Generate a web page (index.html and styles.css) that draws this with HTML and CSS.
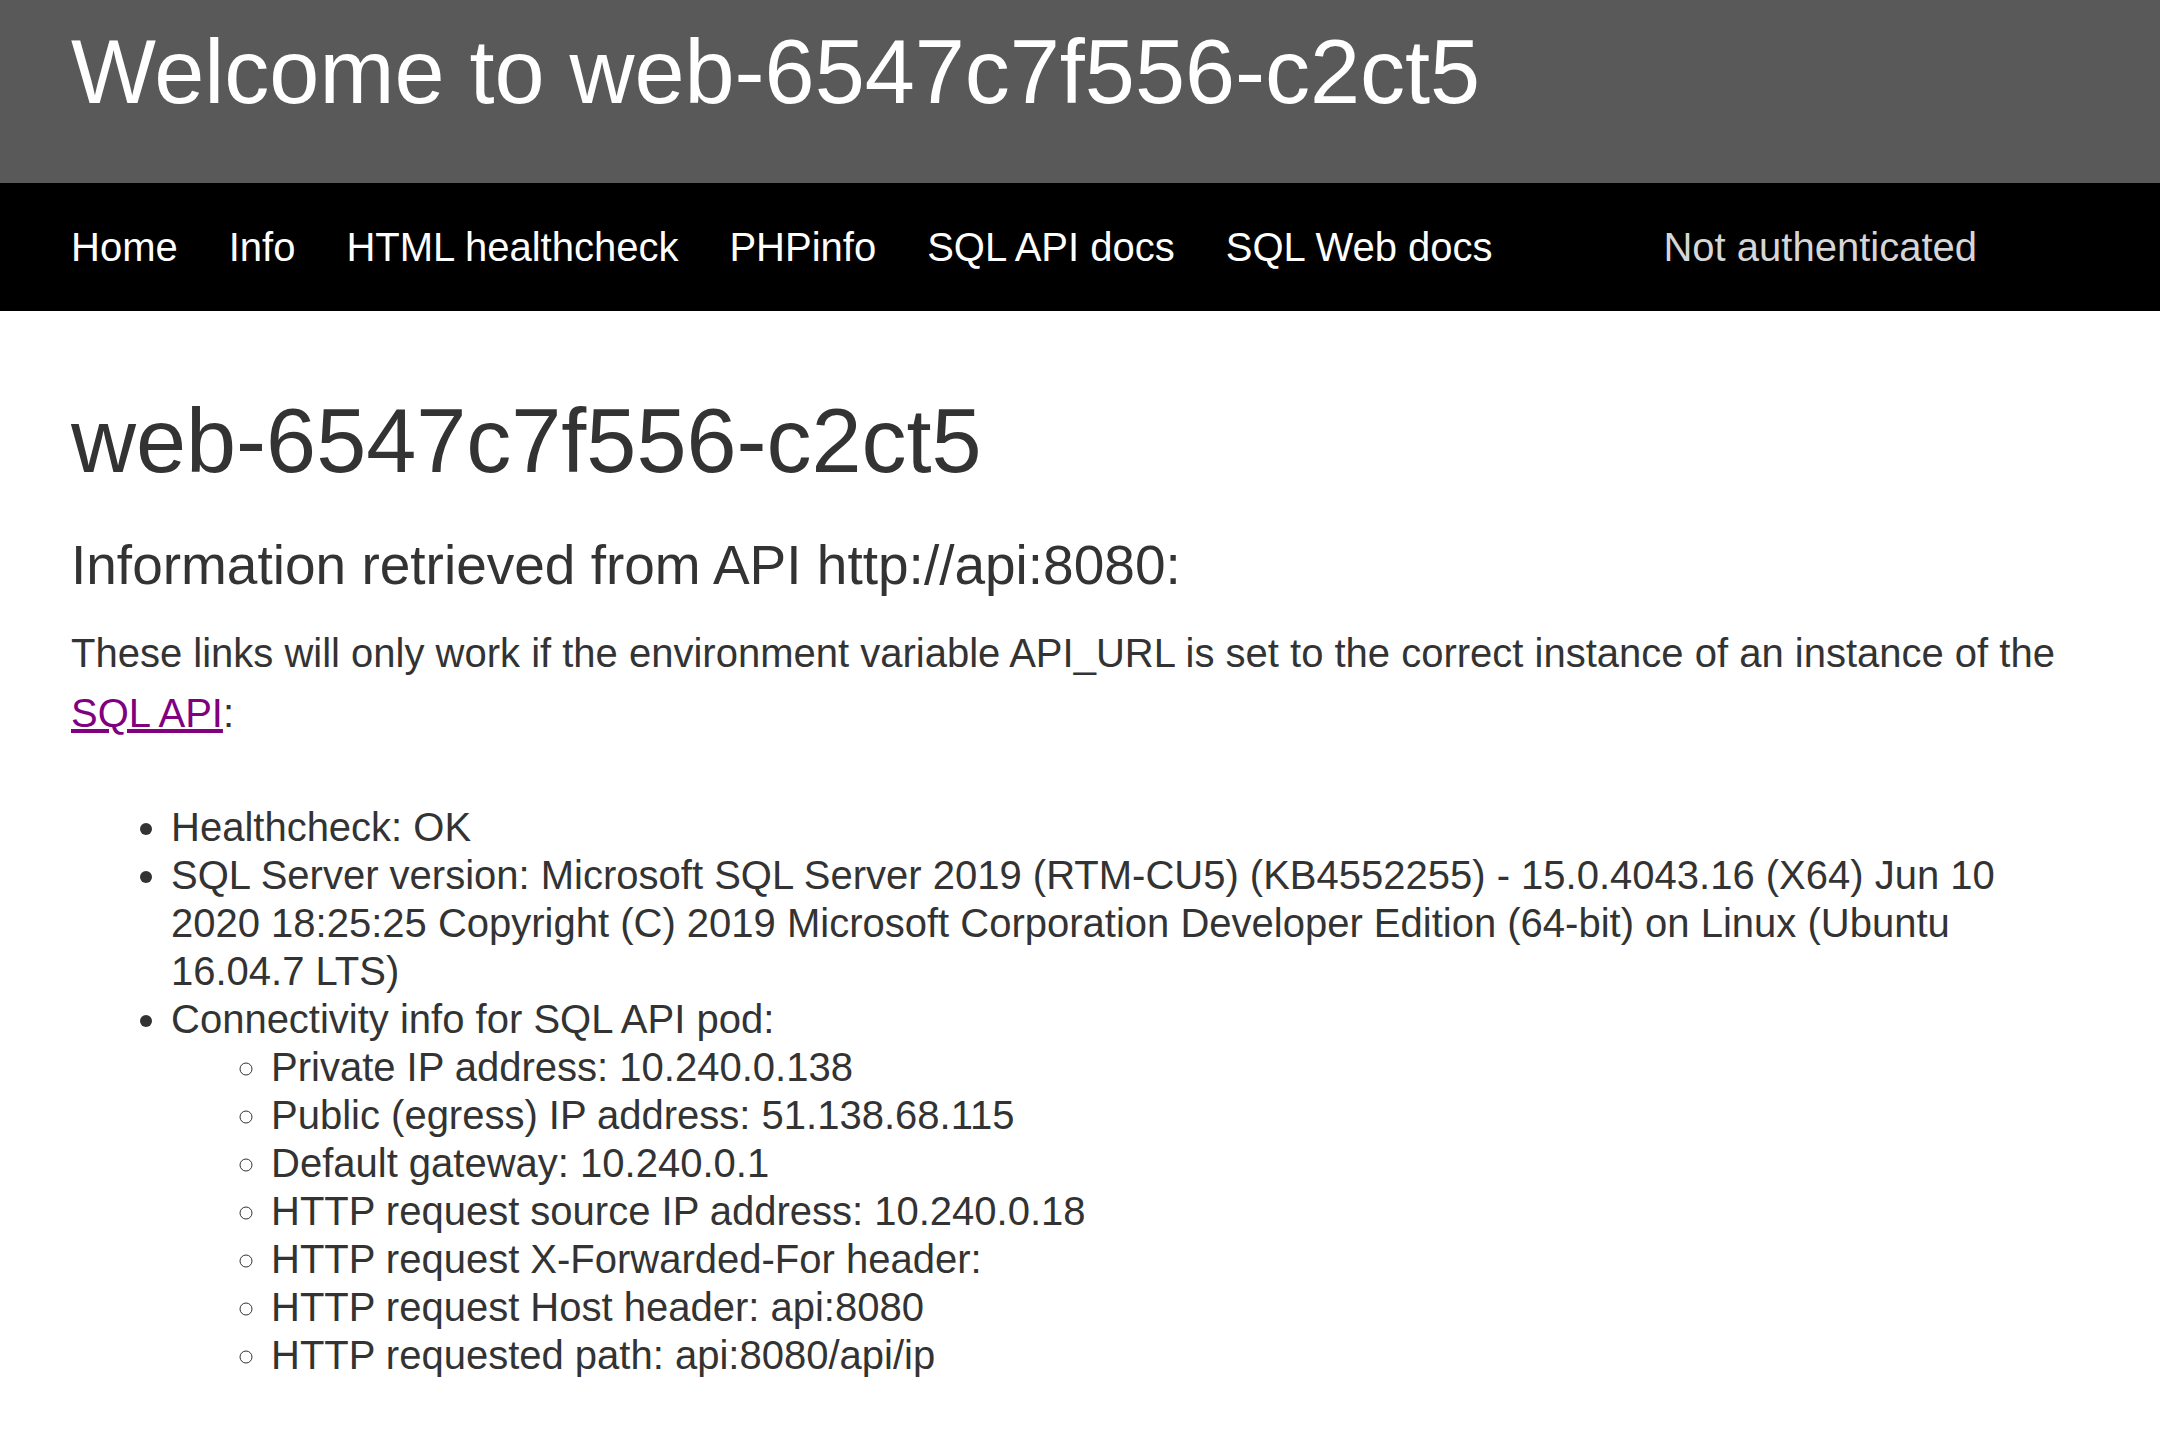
FILE: index.html
```html
<!DOCTYPE html>
<html lang="en">
<head>
<meta charset="utf-8">
<title>Welcome to web-6547c7f556-c2ct5</title>
<link rel="stylesheet" href="styles.css">
</head>
<body>
<header class="banner">
  <h1 class="banner-title">Welcome to web-6547c7f556-c2ct5</h1>
</header>
<nav class="topnav">
  <a class="nav-link" href="#">Home</a>
  <a class="nav-link" href="#">Info</a>
  <a class="nav-link" href="#">HTML healthcheck</a>
  <a class="nav-link" href="#">PHPinfo</a>
  <a class="nav-link" href="#">SQL API docs</a>
  <a class="nav-link" href="#">SQL Web docs</a>
  <span class="auth">Not authenticated</span>
</nav>
<main class="content">
  <h1 class="host">web-6547c7f556-c2ct5</h1>
  <h3 class="subtitle">Information retrieved from API http://api:8080:</h3>
  <p class="intro">These links will only work if the environment variable API_URL is set to the correct instance of an instance of the <a class="doc-link" href="#">SQL API</a>:</p>
  <ul class="info-list">
    <li>Healthcheck: OK</li>
    <li>SQL Server version: Microsoft SQL Server 2019 (RTM-CU5) (KB4552255) - 15.0.4043.16 (X64) Jun 10 2020 18:25:25 Copyright (C) 2019 Microsoft Corporation Developer Edition (64-bit) on Linux (Ubuntu 16.04.7 LTS)</li>
    <li>Connectivity info for SQL API pod:
      <ul class="sub-list">
        <li>Private IP address: 10.240.0.138</li>
        <li>Public (egress) IP address: 51.138.68.115</li>
        <li>Default gateway: 10.240.0.1</li>
        <li>HTTP request source IP address: 10.240.0.18</li>
        <li>HTTP request X-Forwarded-For header: </li>
        <li>HTTP request Host header: api:8080</li>
        <li>HTTP requested path: api:8080/api/ip</li>
      </ul>
    </li>
  </ul>
</main>
</body>
</html>
```
FILE: styles.css
```css
html, body {
  margin: 0;
  padding: 0;
  background: #ffffff;
}

body {
  font-family: "Liberation Sans", Arial, sans-serif;
  color: #333333;
  font-size: 40px;
}

.banner {
  box-sizing: border-box;
  height: 183px;
  background: #595959;
  padding: 20px 71px 0;
}

.banner-title {
  margin: 0;
  font-size: 90px;
  line-height: 104px;
  font-weight: normal;
  color: #ffffff;
}

.topnav {
  box-sizing: border-box;
  height: 128px;
  background: #000000;
  display: flex;
  align-items: center;
  gap: 51px;
  padding: 0 71px;
  line-height: 46px;
}

.nav-link {
  color: #ffffff;
  text-decoration: none;
}

.auth {
  margin: 0 112px 0 auto;
  color: #d6d6d6;
}

.content {
  padding: 0 70px 0 71px;
}

.host {
  margin: 76px 0 0;
  font-size: 90px;
  line-height: 108px;
  font-weight: normal;
}

.subtitle {
  margin: 37px 0 0;
  font-size: 55px;
  line-height: 66px;
  font-weight: normal;
}

.intro {
  margin: 25px 0 60px;
  line-height: 60px;
}

.doc-link {
  color: #800080;
  text-decoration: underline;
}

.info-list {
  margin: 0;
  padding-left: 100px;
  line-height: 48px;
  list-style: disc;
}

.sub-list {
  margin: 0;
  padding-left: 100px;
  list-style: circle;
}
```
